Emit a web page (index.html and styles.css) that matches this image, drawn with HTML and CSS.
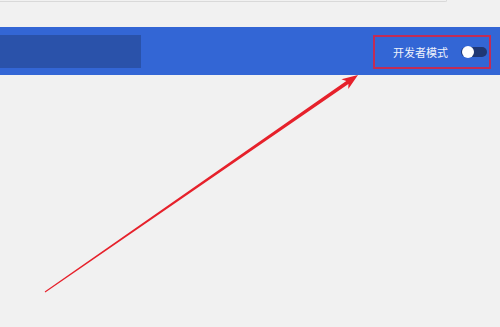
FILE: index.html
```html
<!DOCTYPE html>
<html lang="zh-CN">
<head>
<meta charset="utf-8">
<title>开发者模式</title>
<link rel="stylesheet" href="styles.css">
</head>
<body>
<div class="page">
  <div class="topstrip">
    <div class="field"></div>
  </div>
  <header class="bar">
    <div class="search"></div>
    <div class="highlight">
      <span class="label">开发者模式</span>
      <span class="toggle"><span class="knob"></span></span>
    </div>
  </header>
  <main class="content"></main>
  <svg class="arrow" width="500" height="327" viewBox="0 0 500 327" aria-hidden="true">
    <polygon fill="#e6212b" points="45.3,292.5 348.4,83.9 348.3,89.1 358,75 341.4,79.2 346.3,80.9 44.7,291.5"/>
  </svg>
</div>
</body>
</html>
```

FILE: styles.css
```css
html, body {
  margin: 0;
  padding: 0;
  background: #f1f1f1;
}
.page {
  position: relative;
  width: 500px;
  height: 327px;
  overflow: hidden;
  font-family: "Noto Sans CJK SC", "Noto Sans", sans-serif;
}
.topstrip {
  height: 27px;
  background: #f1f1f1;
}
.field {
  width: 446px;
  height: 1px;
  border-bottom: 1px solid #d9d9d9;
  border-right: 1px solid #d9d9d9;
  border-bottom-right-radius: 3px;
}
.bar {
  height: 48px;
  background: #3366d5;
  display: flex;
  align-items: center;
  justify-content: space-between;
  padding-right: 9px;
  box-sizing: border-box;
}
.search {
  width: 141px;
  height: 33px;
  background: #2a52aa;
  margin-top: 1px;
}
.highlight {
  width: 118px;
  height: 34px;
  box-sizing: border-box;
  border: 2px solid #c22c55;
  display: flex;
  align-items: center;
  padding-left: 18px;
  gap: 13px;
  margin-top: 1px;
}
.label {
  color: #eef2fb;
  font-size: 11px;
  line-height: 12px;
  white-space: nowrap;
}
.toggle {
  position: relative;
  width: 26px;
  height: 10px;
  border-radius: 5px;
  background: #1f3774;
}
.knob {
  position: absolute;
  left: 1px;
  top: -1px;
  width: 12px;
  height: 12px;
  border-radius: 50%;
  background: #ffffff;
}
.content {
  height: 252px;
}
.arrow {
  position: absolute;
  left: 0;
  top: 0;
  pointer-events: none;
}
```
